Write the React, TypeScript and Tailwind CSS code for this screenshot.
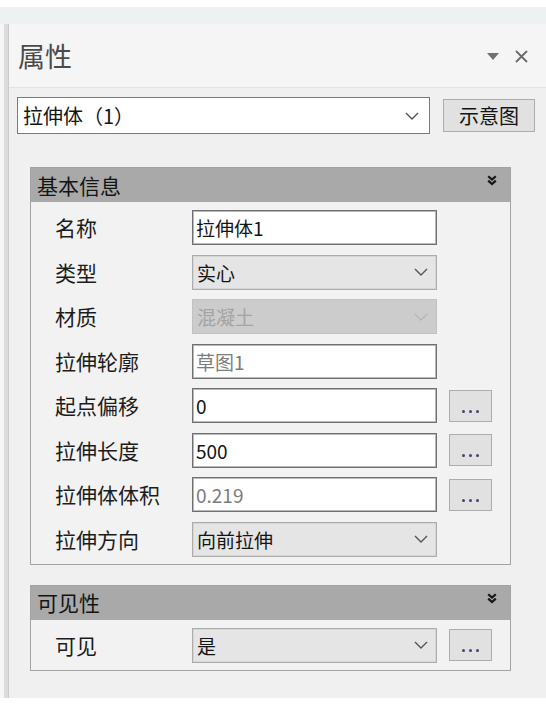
import React from 'react';

const FONT = '"Noto Sans CJK SC", "Microsoft YaHei", sans-serif';

const Chevron: React.FC<{ color?: string }> = ({ color = '#555555' }) => (
  <svg width="14" height="8" viewBox="0 0 14 8" fill="none">
    <path d="M1 1l6 6 6-6" stroke={color} strokeWidth="1.4" />
  </svg>
);

const DoubleChevron: React.FC = () => (
  <svg width="10" height="11" viewBox="0 0 10 11" fill="none">
    <path d="M1.2 1.2l3.8 3.4 3.8-3.4M1.2 5.6l3.8 3.4 3.8-3.4" stroke="#161616" strokeWidth="2.2" />
  </svg>
);

const DotsButton: React.FC = () => (
  <div className="w-[43px] h-[32px] bg-[#e1e1e1] border border-[#adadad] flex items-end justify-center gap-[4px] pb-[8px]">
    <span className="w-[3px] h-[3px] rounded-full bg-[#4a4070]" />
    <span className="w-[3px] h-[3px] rounded-full bg-[#4a4070]" />
    <span className="w-[3px] h-[3px] rounded-full bg-[#4a4070]" />
  </div>
);

type Kind = 'text' | 'readonly' | 'select' | 'disabled';

interface Row {
  label: string;
  value: string;
  kind: Kind;
  dots?: boolean;
}

const Field: React.FC<{ row: Row }> = ({ row }) => {
  const { kind, value } = row;
  if (kind === 'select' || kind === 'disabled') {
    const disabled = kind === 'disabled';
    return (
      <div
        className={`w-[245px] h-[35px] flex items-center justify-between pl-[4px] pr-[8px] border ${
          disabled
            ? 'bg-[#cccccc] border-[#c2c2c2] text-[#a4a4a4]'
            : 'bg-[#e5e5e5] border-[#acacac] text-[#141414] shadow-[inset_0_0_0_1px_#d6d6d6]'
        }`}
      >
        <span className="text-[19px] leading-none">{value}</span>
        <Chevron color={disabled ? '#b6b6b6' : '#555555'} />
      </div>
    );
  }
  return (
    <div className="w-[245px] h-[35px] flex items-center pl-[3px] bg-white border border-[#707070] shadow-[inset_0_0_0_1px_#b9b9b9]">
      <span className={`text-[19px] leading-none ${kind === 'readonly' ? 'text-[#7c7c7c]' : 'text-[#141414]'}`}>
        {value}
      </span>
    </div>
  );
};

const Group: React.FC<{ title: string; rows: Row[] }> = ({ title, rows }) => (
  <div className="ml-[21px] w-[481px] border border-[#a3a3a3] bg-[#f2f2f2]">
    <div className="h-[34px] bg-[#a9a9a9] flex items-center justify-between pl-[6px] pr-[13px]">
      <span className="text-[21px] leading-none text-[#141414]">{title}</span>
      <div className="self-start mt-[7px]">
        <DoubleChevron />
      </div>
    </div>
    <div className="flex flex-col gap-[9.5px] pt-[8px] pb-[7px]">
      {rows.map((r) => (
        <div key={r.label} className="h-[35px] flex items-center">
          <span className="w-[161px] pl-[24px] text-[21px] leading-none text-[#1c1c1c]">{r.label}</span>
          <Field row={r} />
          {r.dots && (
            <div className="ml-[12px]">
              <DotsButton />
            </div>
          )}
        </div>
      ))}
    </div>
  </div>
);

const basicRows: Row[] = [
  { label: '名称', value: '拉伸体1', kind: 'text' },
  { label: '类型', value: '实心', kind: 'select' },
  { label: '材质', value: '混凝土', kind: 'disabled' },
  { label: '拉伸轮廓', value: '草图1', kind: 'readonly' },
  { label: '起点偏移', value: '0', kind: 'text', dots: true },
  { label: '拉伸长度', value: '500', kind: 'text', dots: true },
  { label: '拉伸体体积', value: '0.219', kind: 'readonly', dots: true },
  { label: '拉伸方向', value: '向前拉伸', kind: 'select' },
];

const visRows: Row[] = [{ label: '可见', value: '是', kind: 'select', dots: true }];

export default function App() {
  return (
    <div className="w-[546px] h-[706px] bg-white flex flex-col" style={{ fontFamily: FONT }}>
      <div className="h-[7px]" />
      <div className="h-[17px] bg-[#eef1f1]" />
      <div className="flex flex-1">
        <div className="w-[4px] bg-[#f6f6f6]" />
        <div className="w-[5px] bg-[#dcdcdc] border-r border-[#cbcbcb]" />
        <div className="flex-1 flex flex-col bg-[#f0f0f0]">
          {/* title bar */}
          <div className="h-[64px] bg-[#f5f5f5] border-b border-[#e2e2e2] flex items-center justify-between pl-[9px] pr-[18px]">
            <span className="text-[27px] leading-none text-[#4a4a4a]">属性</span>
            <div className="flex items-center gap-[16px] mt-[2px]">
              <svg width="12" height="7" viewBox="0 0 12 7">
                <path d="M0 0h12L6 7z" fill="#707070" />
              </svg>
              <svg width="13" height="13" viewBox="0 0 13 13">
                <path d="M1 1l11 11M12 1L1 12" stroke="#6a6a6a" strokeWidth="1.8" />
              </svg>
            </div>
          </div>

          {/* selector row */}
          <div className="flex items-center pt-[9px] pl-[8px]">
            <div className="w-[413px] h-[37px] bg-white border border-[#7a7a7a] flex items-center justify-between pl-[5px] pr-[10px]">
              <span className="text-[20px] leading-none text-[#141414]">拉伸体（1）</span>
              <Chevron />
            </div>
            <div className="ml-[13px] w-[92px] h-[33px] bg-[#e1e1e1] border border-[#adadad] flex items-center justify-center">
              <span className="text-[20px] leading-none text-[#141414]">示意图</span>
            </div>
          </div>

          <div className="mt-[33px]">
            <Group title="基本信息" rows={basicRows} />
          </div>
          <div className="mt-[20px]">
            <Group title="可见性" rows={visRows} />
          </div>
        </div>
      </div>
      <div className="h-[8px]" />
    </div>
  );
}
